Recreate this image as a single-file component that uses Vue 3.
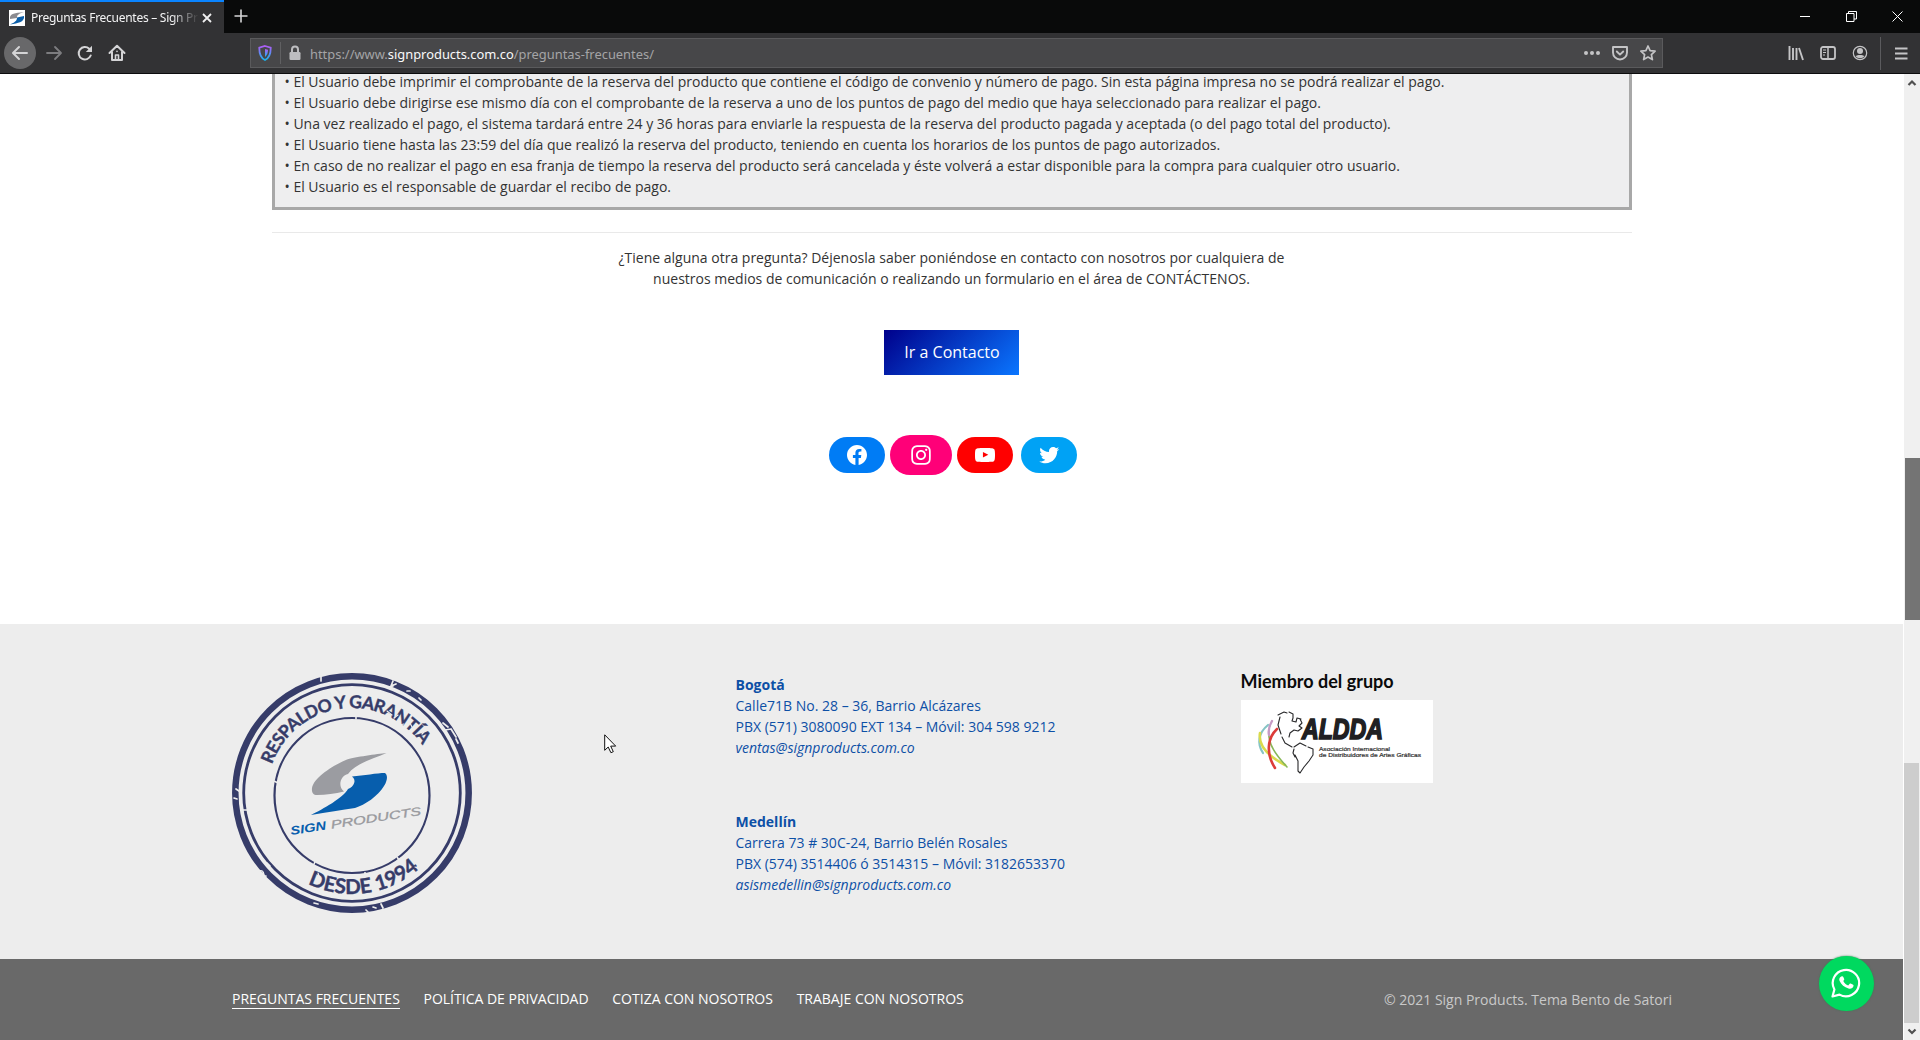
<script setup>
const rules = [
  'El Usuario debe imprimir el comprobante de la reserva del producto que contiene el código de convenio y número de pago. Sin esta página impresa no se podrá realizar el pago.',
  'El Usuario debe dirigirse ese mismo día con el comprobante de la reserva a uno de los puntos de pago del medio que haya seleccionado para realizar el pago.',
  'Una vez realizado el pago, el sistema tardará entre 24 y 36 horas para enviarle la respuesta de la reserva del producto pagada y aceptada (o del pago total del producto).',
  'El Usuario tiene hasta las 23:59 del día que realizó la reserva del producto, teniendo en cuenta los horarios de los puntos de pago autorizados.',
  'En caso de no realizar el pago en esa franja de tiempo la reserva del producto será cancelada y éste volverá a estar disponible para la compra para cualquier otro usuario.',
  'El Usuario es el responsable de guardar el recibo de pago.'
]
const social = [
  { name: 'facebook', d: 'M12 2C6.5 2 2 6.5 2 12c0 5 3.7 9.1 8.4 9.9v-7H7.9V12h2.5V9.8c0-2.5 1.5-3.9 3.8-3.9 1.1 0 2.2.2 2.2.2v2.5h-1.3c-1.2 0-1.6.8-1.6 1.6V12h2.8l-.4 2.9h-2.3v7C18.3 21.1 22 17 22 12c0-5.500-4.500-10-10-10z' },
  { name: 'instagram', d: 'M12,4.622c2.403,0,2.688,0.009,3.637,0.052c0.877,0.04,1.354,0.187,1.671,0.31c0.42,0.163,0.72,0.358,1.035,0.673c0.315,0.315,0.51,0.615,0.673,1.035c0.123,0.317,0.27,0.794,0.31,1.671c0.043,0.949,0.052,1.234,0.052,3.637s-0.009,2.688-0.052,3.637c-0.04,0.877-0.187,1.354-0.31,1.671c-0.163,0.42-0.358,0.72-0.673,1.035c-0.315,0.315-0.615,0.51-1.035,0.673c-0.317,0.123-0.794,0.27-1.671,0.31c-0.949,0.043-1.233,0.052-3.637,0.052s-2.688-0.009-3.637-0.052c-0.877-0.04-1.354-0.187-1.671-0.31c-0.42-0.163-0.72-0.358-1.035-0.673c-0.315-0.315-0.51-0.615-0.673-1.035c-0.123-0.317-0.27-0.794-0.31-1.671C4.631,14.688,4.622,14.403,4.622,12s0.009-2.688,0.052-3.637c0.04-0.877,0.187-1.354,0.31-1.671c0.163-0.42,0.358-0.72,0.673-1.035c0.315-0.315,0.615-0.51,1.035-0.673c0.317-0.123,0.794-0.27,1.671-0.31C9.312,4.631,9.597,4.622,12,4.622M12,3C9.556,3,9.249,3.010,8.289,3.054C7.331,3.098,6.677,3.250,6.105,3.472C5.513,3.702,5.011,4.010,4.511,4.511c-0.500,0.500-0.808,1.002-1.038,1.594C3.250,6.677,3.098,7.331,3.054,8.289C3.010,9.249,3,9.556,3,12c0,2.444,0.010,2.751,0.054,3.711c0.044,0.958,0.196,1.612,0.418,2.185c0.230,0.592,0.538,1.094,1.038,1.594c0.500,0.500,1.002,0.808,1.594,1.038c0.572,0.222,1.227,0.375,2.185,0.418C9.249,20.990,9.556,21,12,21s2.751-0.010,3.711-0.054c0.958-0.044,1.612-0.196,2.185-0.418c0.592-0.230,1.094-0.538,1.594-1.038c0.500-0.500,0.808-1.002,1.038-1.594c0.222-0.572,0.375-1.227,0.418-2.185C20.990,14.751,21,14.444,21,12s-0.010-2.751-0.054-3.711c-0.044-0.958-0.196-1.612-0.418-2.185c-0.230-0.592-0.538-1.094-1.038-1.594c-0.500-0.500-1.002-0.808-1.594-1.038c-0.572-0.222-1.227-0.375-2.185-0.418C14.751,3.010,14.444,3,12,3L12,3zM12,7.378c-2.552,0-4.622,2.069-4.622,4.622S9.448,16.622,12,16.622s4.622-2.069,4.622-4.622S14.552,7.378,12,7.378zM12,15c-1.657,0-3-1.343-3-3s1.343-3,3-3s3,1.343,3,3S13.657,15,12,15zM16.804,6.116c-0.596,0-1.080,0.484-1.080,1.080s0.484,1.080,1.080,1.080c0.596,0,1.080-0.484,1.080-1.080S17.401,6.116,16.804,6.116z' },
  { name: 'youtube', d: 'M21.800,8.001c0,0-0.195-1.378-0.795-1.985c-0.760-0.797-1.613-0.801-2.004-0.847c-2.799-0.202-6.997-0.202-6.997-0.202h-0.009c0,0-4.198,0-6.997,0.202C4.608,5.216,3.756,5.220,2.995,6.016C2.395,6.623,2.200,8.001,2.200,8.001S2,9.620,2,11.238v1.517c0,1.618,0.200,3.237,0.200,3.237s0.195,1.378,0.795,1.985c0.761,0.797,1.760,0.771,2.205,0.855c1.600,0.153,6.800,0.201,6.800,0.201s4.203-0.006,7.001-0.209c0.391-0.047,1.243-0.051,2.004-0.847c0.600-0.607,0.795-1.985,0.795-1.985s0.200-1.618,0.200-3.237v-1.517C22,9.620,21.800,8.001,21.800,8.001zM9.935,14.594l-0.001-5.620l5.404,2.820L9.935,14.594z' },
  { name: 'twitter', d: 'M22.230,5.924c-0.736,0.326-1.527,0.547-2.357,0.646c0.847-0.508,1.498-1.312,1.804-2.270c-0.793,0.470-1.671,0.812-2.606,0.996C18.324,4.498,17.257,4,16.077,4c-2.266,0-4.103,1.837-4.103,4.103c0,0.322,0.036,0.635,0.106,0.935C8.670,8.867,5.647,7.234,3.623,4.751C3.270,5.357,3.067,6.062,3.067,6.814c0,1.424,0.724,2.679,1.825,3.415c-0.673-0.021-1.305-0.206-1.859-0.513c0,0.017,0,0.034,0,0.052c0,1.988,1.414,3.647,3.292,4.023c-0.344,0.094-0.707,0.144-1.081,0.144c-0.264,0-0.521-0.026-0.772-0.074c0.522,1.630,2.038,2.816,3.833,2.850c-1.404,1.100-3.174,1.756-5.096,1.756c-0.331,0-0.658-0.019-0.979-0.057c1.816,1.164,3.973,1.843,6.290,1.843c7.547,0,11.675-6.252,11.675-11.675c0-0.178-0.004-0.355-0.012-0.531C20.985,7.470,21.680,6.747,22.230,5.924z' }
]
const offices = [
  { city: 'Bogotá', lines: ['Calle71B No. 28 – 36, Barrio Alcázares', 'PBX (571) 3080090 EXT 134 – Móvil: 304 598 9212'], mail: 'ventas@signproducts.com.co' },
  { city: 'Medellín', lines: ['Carrera 73 # 30C-24, Barrio Belén Rosales', 'PBX (574) 3514406 ó 3514315 – Móvil: 3182653370'], mail: 'asismedellin@signproducts.com.co' }
]
const links = ['PREGUNTAS FRECUENTES', 'POLÍTICA DE PRIVACIDAD', 'COTIZA CON NOSOTROS', 'TRABAJE CON NOSOTROS']
</script>

<template>
  <div class="window">
    <header class="tabs">
      <div class="tab">
        <svg class="favicon" width="16" height="16" viewBox="0 0 16 16"><rect width="16" height="16" fill="#fff" /><path d="M1 7C2 4 5 3 15 2 9 4 8 5 8 8L1 9z" fill="#8b8b90" /><path d="M15 8C14 12 10 13 1 14.500 7 12 8 10 8 7.500L15 6z" fill="#0b5ea8" /></svg>
        <span class="title">Preguntas Frecuentes – Sign Pro</span>
        <svg class="close" width="10" height="10" viewBox="0 0 10 10"><path d="M1 1l8 8M9 1L1 9" stroke="#f0f0f0" stroke-width="1.800" /></svg>
      </div>
      <svg class="plus" width="16" height="16" viewBox="0 0 16 16"><path d="M8 1.500v13M1.500 8h13" stroke="#d6d6d8" stroke-width="1.600" /></svg>
      <div class="controls">
        <svg width="11" height="11" viewBox="0 0 11 11"><path d="M0 5.500h10" stroke="#fff" /></svg>
        <svg width="11" height="11" viewBox="0 0 11 11" fill="none" stroke="#fff"><path d="M.5 2.500h7.500v8H.5zM2.500 2.500v-2h8v7.500H8" /></svg>
        <svg width="11" height="11" viewBox="0 0 11 11"><path d="M.5.5l10 10M10.500.5l-10 10" stroke="#fff" /></svg>
      </div>
    </header>

    <div class="toolbar">
      <div class="nav">
        <span class="back"><svg width="18" height="18" viewBox="0 0 18 18" fill="none" stroke="#d4d4d6" stroke-width="2" stroke-linecap="round" stroke-linejoin="round"><path d="M16 9H2.500M8 3L2 9l6 6" /></svg></span>
        <svg width="18" height="18" viewBox="0 0 18 18" fill="none" stroke="#7d7d80" stroke-width="1.800" stroke-linecap="round" stroke-linejoin="round"><path d="M2 9h13.500M10 3l6 6-6 6" /></svg>
        <svg width="18" height="18" viewBox="0 0 18 18" fill="none" stroke="#d4d4d6" stroke-width="2" stroke-linecap="round"><path d="M14.700 11.500A6.200 6.200 0 1 1 13.200 4.800L15 6.500" /><path d="M16 1.800V8H9.800z" fill="#d4d4d6" stroke="none" /></svg>
        <svg width="18" height="18" viewBox="0 0 18 18" fill="none" stroke="#d4d4d6" stroke-width="2" stroke-linecap="round" stroke-linejoin="round"><path d="M1.500 9L9 1.800 16.500 9M4 8v8h10V8" /><path d="M7.500 15v-4h3v4M9 7.200v.3" stroke-width="1.600" /></svg>
      </div>
      <div class="url">
        <svg class="shield" width="14" height="16" viewBox="0 0 14 16"><defs><linearGradient id="sh" x1="0" y1="0" x2="0" y2="1"><stop offset="0" stop-color="#b05cf5" /><stop offset="1" stop-color="#18b4f0" /></linearGradient></defs><path d="M7 1l5.700 1.600C12.800 8 12 12.500 7 15 2 12.500 1.200 8 1.300 2.600z" fill="none" stroke="url(#sh)" stroke-width="1.800" /><path d="M7 4l3 .8c0 3-.8 5.600-3 7.200z" fill="url(#sh)" /></svg>
        <i class="sep"></i>
        <svg class="lock" width="14" height="16" viewBox="0 0 14 16"><rect x="1.500" y="7" width="11" height="8" rx="1.200" fill="#bdbdc0" /><path d="M4 8V4.500a3 3 0 0 1 6 0V8" fill="none" stroke="#bdbdc0" stroke-width="2" /></svg>
        <span class="addr">https://www.<b>signproducts.com.co</b>/preguntas-frecuentes/</span>
        <div class="actions">
          <svg width="16" height="16" viewBox="0 0 16 16" fill="#c4c4c6"><circle cx="2" cy="8" r="2" /><circle cx="8" cy="8" r="2" /><circle cx="14" cy="8" r="2" /></svg>
          <svg width="16" height="16" viewBox="0 0 16 16" fill="none" stroke="#c4c4c6" stroke-width="1.900" stroke-linecap="round" stroke-linejoin="round"><path d="M1 2h14v5.500a7 7 0 0 1-14 0z" /><path d="M4.800 6.500L8 9.600l3.200-3.100" /></svg>
          <svg width="16" height="16" viewBox="0 0 16 16" fill="none" stroke="#c4c4c6" stroke-width="1.700" stroke-linejoin="round"><path d="M8 1l2.100 4.600 5 .6-3.700 3.400 1 5L8 12.100l-4.400 2.500 1-5L.9 6.200l5-.6z" /></svg>
        </div>
      </div>
      <div class="tools">
        <svg width="16" height="16" viewBox="0 0 16 16" stroke="#c4c4c6" stroke-width="1.900"><path d="M1.500 1v14M5 3v12M8.500 3v12M11 3l4 12" /></svg>
        <svg width="16" height="16" viewBox="0 0 16 16" fill="none" stroke="#c4c4c6" stroke-width="1.800"><rect x="1" y="2" width="14" height="12" rx="2" /><path d="M8 2v12" stroke-width="1.500" /><path d="M3 5h3M3 7.500h3M3 10h2" stroke-width="1" /></svg>
        <svg width="16" height="16" viewBox="0 0 16 16"><circle cx="8" cy="8" r="6.700" fill="none" stroke="#c4c4c6" stroke-width="1.200" /><circle cx="8" cy="6" r="3" fill="#c4c4c6" /><path d="M3.500 11c2-1.500 7-1.500 9 0-2 3-7 3-9 0z" fill="#c4c4c6" /></svg>
      </div>
      <i class="divider"></i>
      <svg class="menu" width="13" height="13" viewBox="0 0 13 13"><path d="M0 1.500h12.500M0 6.500h12.500M0 11.500h12.500" stroke="#c4c4c6" stroke-width="1.900" /></svg>
    </div>

    <div class="viewport">
      <div class="page">
        <main>
          <ul class="rules">
            <li v-for="r in rules" :key="r">• {{ r }}</li>
          </ul>
          <hr />
          <p class="ask">¿Tiene alguna otra pregunta? Déjenosla saber poniéndose en contacto con nosotros por cualquiera de<br />nuestros medios de comunicación o realizando un formulario en el área de CONTÁCTENOS.</p>
          <a class="btn">Ir a Contacto</a>
          <div class="social">
            <a v-for="s in social" :key="s.name" :class="s.name"><svg viewBox="0 0 24 24"><path :d="s.d" fill="#fff" /></svg></a>
          </div>
        </main>

        <section class="info">
          <svg class="seal" width="240" height="240" viewBox="0 0 240 240">
            <defs>
              <path id="arcTop" d="M35 120a85 85 0 0 1 170 0" />
              <path id="arcBottom" d="M19 120a101 101 0 0 0 202 0" />
            </defs>
            <g fill="none" stroke="#363c69">
              <circle cx="120" cy="120" r="116.700" stroke-width="6.500" />
              <circle cx="120" cy="120" r="108.300" stroke-width="2.800" />
              <circle cx="120" cy="122.500" r="77.500" stroke-width="2.200" />
            </g>
            <g class="stamp">
              <text font-size="17.500"><textPath href="#arcTop" startOffset="45.900%" text-anchor="middle" textLength="187">RESPALDO Y GARANTÍA</textPath></text>
              <text font-size="20.500"><textPath href="#arcBottom" startOffset="54.400%" text-anchor="middle" textLength="119">DESDE 1994</textPath></text>
            </g>
            <g fill="none" stroke="#ededed">
              <path d="M63 61l2 3M124 43.500v3M54 94l3 1M185 78l3-2M83 189l-2 4M133 199v4M165 184l2 3M42 108l4 2" stroke-width="1.600" />
              <path d="M161 8l-2 5 5-2M157 14l4-1M211 50l5 4M213 57l6-1M219 56l5 8M224 66l2 4M24 197l6 1M28 203l6 0M31 199l2 7M35 207l2 4M35 190l3 3M82 230l4 1M78 235l3 1M149 231l2 4M141 234l3 1M134 237l2 2M4 116l3 2M2 125l3 1M89 4v4M10 137h6M175 18l3 0M187 25l2 2" stroke-width="1.700" stroke-linecap="round" />
              <path d="M155 38l5 4M162 45l4-3M167 52l5-1M178 50l2 4M190 61l3-3M98 206l4 1M174 204l4-3M86 200l1 3M183 194l3 1" stroke-width="1.200" stroke-linecap="round" />
            </g>
            <path d="M154.500 80C145 81 123 84 115 86.500 102 92 82 104 80 115c-.5 4 1 7 5 7 9 0 18-1.500 27-3.500-7-6-3-16 4-17.500C124 90 141 86 154.500 80z" fill="#9b9ca1" />
            <path d="M79 142C91 136 111 125 116 116c6-2 9-9 4-12.500 12-1 25-3.500 33-3.500 4 3 1 10-1 13-6 10-19 19-29 22-13 2-28 4-44 7z" fill="#075ead" />
            <g class="brand" transform="translate(59 162) rotate(-8.800)">
              <text font-size="12" font-weight="700" fill="#075ead" textLength="36" lengthAdjust="spacingAndGlyphs">SIGN</text>
              <text x="41" font-size="11.500" fill="#999a9e" stroke="#999a9e" stroke-width=".3" textLength="91" lengthAdjust="spacingAndGlyphs">PRODUCTS</text>
            </g>
          </svg>

          <div class="offices">
            <div v-for="o in offices" :key="o.city" class="office">
              <strong>{{ o.city }}</strong>
              <span v-for="l in o.lines" :key="l">{{ l }}</span>
              <em>{{ o.mail }}</em>
            </div>
          </div>

          <div class="group">
            <h3>Miembro del grupo</h3>
            <svg width="192" height="83" viewBox="0 0 192 83">
              <rect width="192" height="83" fill="#fff" />
              <g fill="none" stroke-linecap="round">
                <path d="M27 25C17 33 16 44 22 53" stroke="#85c4c5" stroke-width="2.200" />
                <path d="M19 33c-2 12 6 22 25 32" stroke="#d9da4c" stroke-width="2.600" />
                <path d="M28 30c-2 14 8 26 18 37" stroke="#87b758" stroke-width="1.600" />
                <path d="M36 29C26 38 25 54 34 68" stroke="#dc3c39" stroke-width="2.600" />
                <path d="M31 21c-3 5-4 9-3 14" stroke="#c69bc5" stroke-width="2.400" />
                <g stroke="#29292b" stroke-width="1.100" stroke-linejoin="round">
                  <path d="M37 15l6-3 3 1M48 12l4 2 0 4-1 3 4 1 1-4 4 1M59 19l2 4-3 3 3 2-4 3-4-1-4 3-1 4M39 17l-2 8 3 9M41 37l3 6 7 4" />
                  <path d="M53 47l6-4 6 3M67 47l5 2 0 6-4 6-5 6-4 6-2-2 0-10-3-6M53 49l-1 4 2 4" />
                </g>
              </g>
              <text class="aldda" x="61" y="39" textLength="81" lengthAdjust="spacingAndGlyphs">ALDDA</text>
              <g class="tiny"><text x="78" y="51" textLength="71" lengthAdjust="spacingAndGlyphs">Asociación Internacional</text><text x="78" y="56.500" textLength="102" lengthAdjust="spacingAndGlyphs">de Distribuidores de Artes Gráficas</text></g>
            </svg>
          </div>
        </section>

        <footer>
          <nav><a v-for="(l, i) in links" :key="l" :class="{ active: i === 0 }">{{ l }}</a></nav>
          <span>© 2021 Sign Products. Tema Bento de Satori</span>
        </footer>
      </div>

      <aside class="scroll">
        <svg width="16" height="17" viewBox="0 0 16 17"><path d="M4.500 11L8 7.500l3.500 3.500" fill="none" stroke="#505050" stroke-width="2.200" /></svg>
        <i class="gap1"></i><i class="dark"></i><i class="gap2"></i><i class="light"></i>
        <svg width="16" height="17" viewBox="0 0 16 17"><path d="M4.500 6.500L8 10l3.500-3.500" fill="none" stroke="#505050" stroke-width="2.200" /></svg>
      </aside>
    </div>

    <a class="wa"><svg width="30" height="30" viewBox="0 0 30 30" fill="none" stroke="#fff"><path d="M1.500 28.500l1.900-7A13.200 13.200 0 1 1 8.500 26.600z" stroke-width="2.200" stroke-linejoin="round" /><path d="M10.800 8.200c.7-.2 1.200 0 1.500.7l.9 2.200c.2.500 0 .8-.9 1.900 1.100 2.100 2.600 3.500 4.900 4.500l1.500-1.700c.3-.3.700-.3 1-.2l2.400 1.200c.5.300.5.600.4 1.100-.6 2.300-2.700 3.200-5 2.600-4.200-1.100-7.200-4-8.900-7.500-.9-2.100.2-4.200 2.200-4.800z" fill="#fff" stroke="none" /></svg></a>
    <svg class="cursor" width="13" height="20" viewBox="0 0 13 20"><path d="M.7.8v15.500l3.500-3.300 2.700 5.700 2.400-1-2.600-5.600h5z" fill="#fff" stroke="#111" stroke-width="1" /></svg>
  </div>
</template>

<style>
body { margin: 0; overflow: hidden; }
</style>

<style scoped>
* { box-sizing: border-box; }
.window { position: relative; width: 1920px; height: 1040px; display: flex; flex-direction: column; overflow: hidden; background: #fff; font: 14px/21px "Open Sans", sans-serif; color: #333; }
svg { display: block; flex: none; }
.tabs { height: 33px; flex: none; display: flex; align-items: center; background: #090a0a; }
.tab { width: 224px; height: 33px; display: flex; align-items: center; padding: 0 12px 0 9px; background: #323234; border-top: 2px solid #0a84ff; }
.title { width: 167px; margin-left: 6px; overflow: hidden; white-space: nowrap; font: 12px/18px "Noto Sans", sans-serif; letter-spacing: -0.27px; color: #f4f4f5; -webkit-mask-image: linear-gradient(90deg, #000 140px, transparent 168px); mask-image: linear-gradient(90deg, #000 140px, transparent 168px); }
.close { margin-left: 4px; }
.plus { margin-left: 9px; margin-top: -1px; }
.controls { display: flex; gap: 35px; margin: -1px 0 0 auto; padding-right: 17px; }
.toolbar { height: 41px; flex: none; display: flex; align-items: center; background: #323234; border-bottom: 1px solid #0c0c0d; }
.nav { display: flex; align-items: center; gap: 13.500px; padding-left: 4px; width: 250px; }
.back { display: flex; align-items: center; justify-content: center; width: 32px; height: 32px; border-radius: 50%; background: #68686a; margin-right: -5px; }
.url { width: 1413px; height: 30px; display: flex; align-items: center; border: 1px solid #5a5a5c; background: #474749; }
.shield { margin-left: 7px; }
.sep { width: 1px; height: 22px; margin: 0 7px 0 8px; background: #606062; }
.addr { margin: 2px 0 0 8px; font: 12.900px/18px "Noto Sans", sans-serif; color: #a4a4a6; white-space: nowrap; }
.addr b { font-weight: 400; color: #f9f9fa; }
.actions { display: flex; gap: 12px; margin-left: auto; padding-right: 6px; }
.tools { display: flex; gap: 16px; margin-left: 125px; }
.divider { width: 1px; height: 33px; margin-left: 12px; background: #5b5b5e; }
.menu { margin-left: 14px; }
.viewport { flex: 1; display: flex; min-height: 0; }
.page { width: 1903px; display: flex; flex-direction: column; }
main { height: 550px; flex: none; display: flex; flex-direction: column; align-items: center; }
.rules { width: 1360px; height: 136px; margin: 0; padding: 0 0 0 10px; list-style: none; border: 3px solid #a8a8a8; border-top: 0; background: #eeeeef; white-space: nowrap; overflow: hidden; }
.rules li { position: relative; top: -3px; }
hr { width: 1360px; height: 1px; margin: 22px 0 0; border: 0; background: #e9e9e9; }
.ask { margin: 14px 0 0; text-align: center; }
.btn { margin-top: 41px; width: 135px; height: 45px; padding-left: 1px; text-align: center; font-size: 16px; line-height: 44px; color: #fff; background: linear-gradient(135deg, #00008b, #0a76ff); }
.social { display: flex; align-items: center; gap: 5px; margin-top: 60px; padding-left: 3px; }
.social a { width: 56px; height: 36px; display: flex; align-items: center; justify-content: center; border-radius: 18px; }
.social svg { width: 24px; height: 24px; }
.social .facebook { background: #007cf5; }
.social .instagram { width: 62px; height: 40px; border-radius: 20px; background: #ff0078; }
.social .instagram svg { width: 26px; height: 26px; }
.social .youtube { background: #f00; }
.social .twitter { background: #00a2f5; margin-left: 3px; }
.info { height: 335px; flex: none; display: flex; padding-left: 232px; background: #ededed; }
.seal { margin-top: 49px; }
.stamp { font-family: Lato, sans-serif; font-weight: 700; fill: #363c69; stroke: #363c69; stroke-width: .4px; }
.brand { font-family: "Liberation Sans", sans-serif; font-style: italic; }
.offices { width: 505px; margin-left: 263.500px; padding-top: 50px; color: #0d50a6; }
.office { display: flex; flex-direction: column; margin-bottom: 53px; white-space: nowrap; }
.group { padding-top: 44px; }
.group h3 { margin: 0 0 6px; height: 26px; font: 700 18px/27px Lato, sans-serif; color: #0a0a0a; white-space: nowrap; }
.aldda { font: italic 700 30px "Liberation Sans", sans-serif; fill: #202022; stroke: #202022; stroke-width: 1.700px; }
.tiny { font: 5.500px "Liberation Sans", sans-serif; fill: #333; stroke: #333; stroke-width: .2px; }
footer { flex: 1; display: flex; align-items: center; justify-content: space-between; padding: 0 231px 1px 232px; background: #696969; color: #c9c9c9; }
nav { display: flex; gap: 23.700px; white-space: nowrap; margin-top: -1px; }
nav a { height: 21px; line-height: 21px; color: #fff; }
nav .active { border-bottom: 1px solid #fff; }
.scroll { width: 17px; flex: none; display: flex; flex-direction: column; border-left: 1px solid #fff; background: #f0f0f0; }
.gap1 { height: 367px; }
.dark { height: 162px; margin-left: 1px; background: #747474; }
.gap2 { height: 143px; }
.light { flex: 1; margin: 0 1px 0 0; background: #cdcdcd; }
.wa { position: absolute; left: 1818.500px; top: 955.500px; width: 55px; height: 55px; border-radius: 50%; background: #00d95f; box-shadow: 0 0 2px #3a7a50; display: flex; align-items: center; justify-content: center; }
.cursor { position: absolute; left: 604px; top: 734px; }
</style>
